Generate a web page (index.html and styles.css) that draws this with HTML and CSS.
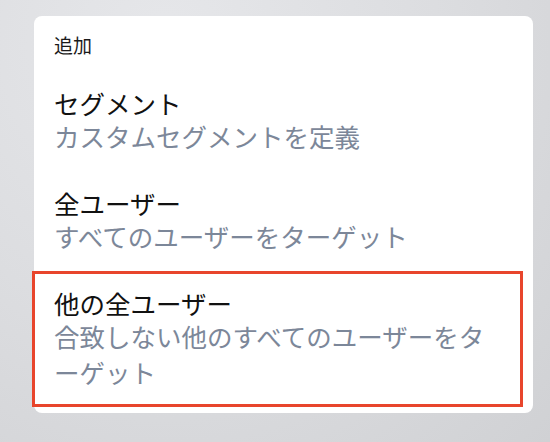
FILE: index.html
```html
<html>
    <head>
        <meta charset="utf-8">
        <title>追加</title>
        <link rel="stylesheet" href="styles.css">
    </head>

    <body>
        <div class="menu">
            <div class="menu-title">追加</div>
            <ul>
                <li class="menu-item">
                    <div class="item-name">セグメント</div>
                    <div class="item-desc">カスタムセグメントを定義</div>
                </li>
                <li class="menu-item">
                    <div class="item-name">全ユーザー</div>
                    <div class="item-desc">すべてのユーザーをターゲット</div>
                </li>
                <li class="menu-item selected">
                    <div class="item-name">他の全ユーザー</div>
                    <div class="item-desc">合致しない他のすべてのユーザーをターゲット</div>
                </li>
            </ul>
        </div>
    </body>
</html>
```

FILE: styles.css
```css
html{
    height: 100%;
}

body{
    margin: 0;
    height: 100%;
    overflow: hidden;
    font-family: "Noto Sans CJK JP", "Noto Sans", sans-serif;
    background: radial-gradient(ellipse at 30% 10%, #e6e7ea 0%, #dcdde0 50%, #d0d1d4 100%);
    padding: 16px 17px 0 34px;
    box-sizing: border-box;
}

ul{
    list-style: none;
    margin: 0;
    padding: 0;
}

.menu{
    background: #fff;
    border-radius: 8px;
    padding: 16px 0 6px 0;
    height: 397px;
    box-sizing: border-box;
}

.menu-title{
    font-size: 19px;
    line-height: 26px;
    color: #1a1a1a;
    padding: 0 20px;
    margin-bottom: 13px;
}

.menu-item{
    padding: 17px 20px;
}

.item-name{
    font-size: 25.5px;
    line-height: 30px;
    color: #111;
}

.item-desc{
    font-size: 25.5px;
    line-height: 36px;
    color: #7c8799;
}

.selected{
    border: 3px solid #e8452c;
    margin: 0 10px 0 -2px;
    padding: 14px 20px 14px 19px;
}
```
